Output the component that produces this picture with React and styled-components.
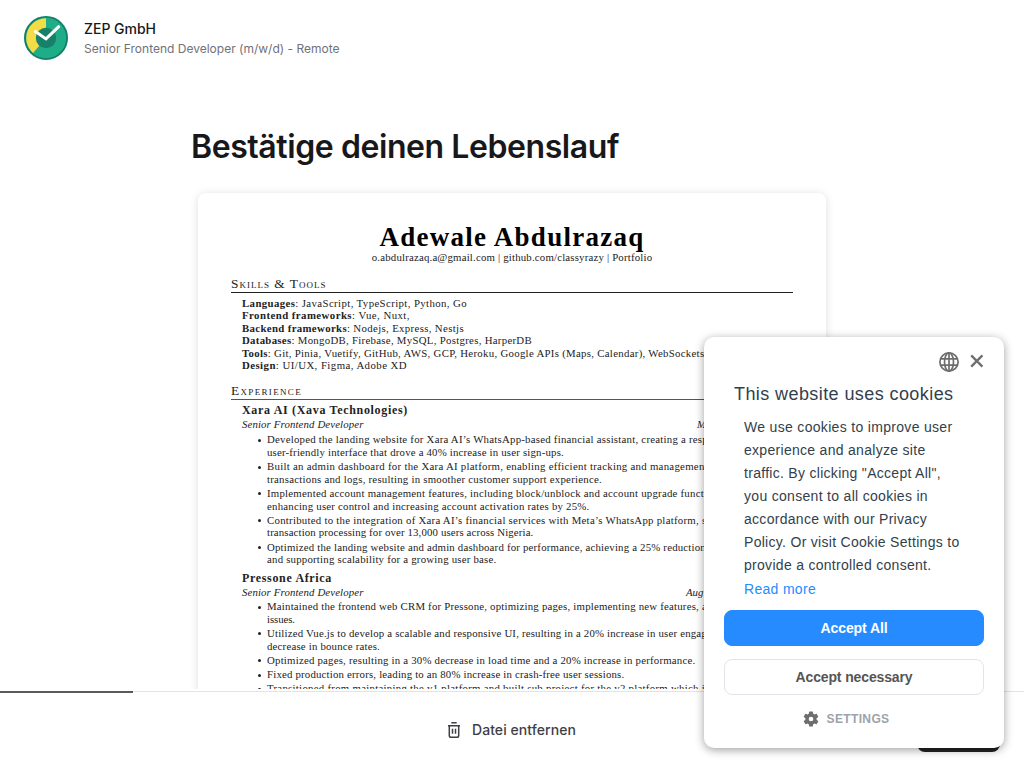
import React, { useLayoutEffect, useRef } from "react";
import styled, { createGlobalStyle } from "styled-components";

const Global = createGlobalStyle`
  * { box-sizing: border-box; }
  body { margin: 0; background: #fff; overflow: hidden; }
`;

const Page = styled.div`
  width: 1024px;
  height: 768px;
  display: flex;
  flex-direction: column;
  overflow: hidden;
  background: #fff;
  font-family: Inter, "Liberation Sans", sans-serif;
  color: #18181b;
`;

const Header = styled.header`
  flex: none;
  height: 76px;
  padding: 0 24px;
  display: flex;
  align-items: center;
  gap: 16px;
`;

const Company = styled.div`
  font-size: 14px;
  font-weight: 500;
  line-height: 20px;
  color: #18181b;
`;

const Position = styled.div`
  font-size: 12px;
  line-height: 18px;
  margin-top: 1px;
  color: #71717a;
`;

const Main = styled.main`
  flex: none;
  height: 613px;
  overflow: hidden;
  padding: 47px 192px 0;
`;

const Heading = styled.h1`
  margin: 0 0 0 -1px;
  height: 48px;
  font-size: 32px;
  font-weight: 600;
  line-height: 48px;
`;

const Sheet = styled.article`
  width: 628px;
  height: 860px;
  margin: 22px 0 0 6px;
  padding: 31px 33px;
  border-radius: 8px;
  background: #fff;
  box-shadow: 0 1px 10px rgba(0, 0, 0, 0.13);
  font-family: "Liberation Serif", serif;
  font-size: 10.8px;
  line-height: 12.5px;
  color: #222;
`;

const Name = styled.div`
  text-align: center;
  font-size: 27px;
  font-weight: 700;
  line-height: 26px;
  color: #000;
`;

const Contact = styled.div`
  margin-top: 0.8px;
  text-align: center;
`;

const SectionTitle = styled.div`
  margin-top: ${(p) => p.$top}px;
  padding-bottom: 1.4px;
  border-bottom: 1px solid ${(p) => p.$rule};
  font-size: 13.4px;
  line-height: 14px;
  font-variant: small-caps;
`;

const Skills = styled.div`
  padding: 3.8px 0 0 11px;
`;

const Row = styled.div`
  height: 12.5px;
  white-space: nowrap;
`;

const Job = styled.section`
  padding-left: 11px;
  margin-top: ${(p) => p.$top}px;
`;

const Employer = styled.div`
  height: 14px;
  font-size: 12px;
  font-weight: 700;
  line-height: 14px;
`;

const Role = styled.div`
  display: flex;
  justify-content: space-between;
  height: 12.5px;
  margin-top: 1.1px;
  font-style: italic;
`;

const Dates = styled.span`
  width: ${(p) => p.$w}px;
`;

const Points = styled.ul`
  list-style: none;
  margin: ${(p) => p.$top}px 0 0;
  padding: 0;
  display: flex;
  flex-direction: column;
  gap: 1.8px;
`;

const Point = styled.li`
  display: grid;
  grid-template-columns: 19px 1fr;
  column-gap: 6px;
`;

const Dot = styled.i`
  justify-self: end;
  width: 3px;
  height: 3px;
  margin-top: 5.4px;
  border-radius: 50%;
  background: #222;
`;

const Span = styled.span`
  display: inline-block;
  white-space: nowrap;
`;

/* Spreads its text over a given measure by adjusting the tracking. */
function Fit({ w, children }) {
  const ref = useRef(null);
  useLayoutEffect(() => {
    const el = ref.current;
    el.style.letterSpacing = "0.001px";
    const natural = el.getBoundingClientRect().width;
    el.style.letterSpacing = `${(w - natural) / el.textContent.length}px`;
  }, [w]);
  return <Span ref={ref}>{children}</Span>;
}

const Footer = styled.footer`
  flex: none;
  margin-top: 2px;
  height: 77px;
  border-top: 1px solid #e4e4e7;
  display: grid;
  grid-template-columns: 1fr auto 1fr;
  align-items: center;
  padding: 0 24px;
  position: relative;
`;

const Progress = styled.div`
  position: absolute;
  left: 0;
  top: -1px;
  width: 133px;
  height: 2px;
  background: #5a5a5c;
`;

const Remove = styled.div`
  grid-column: 2;
  display: flex;
  align-items: center;
  gap: 10px;
  padding-right: 2px;
  font-size: 14px;
  font-weight: 500;
  line-height: 20px;
  color: #3f3f46;
`;

const Next = styled.div`
  justify-self: end;
  width: 83px;
  height: 44px;
  border-radius: 8px;
  background: #222;
`;

const Cookie = styled.aside`
  position: absolute;
  left: 704px;
  top: 337px;
  width: 300px;
  height: 411px;
  border-radius: 10px;
  background: #fff;
  box-shadow: 0 2px 10px rgba(0, 0, 0, 0.38);
  padding: 14px 20px 0;
  font-family: "Liberation Sans", Arial, sans-serif;
  color: #323f4d;
`;

const Tools = styled.div`
  display: flex;
  justify-content: flex-end;
  gap: 11px;
  height: 22px;
`;

const CookieTitle = styled.div`
  margin: 9px 0 0 10px;
  height: 24px;
  font-size: 18px;
  line-height: 24px;
`;

const CookieText = styled.div`
  margin: 10px 0 0 20px;
  font-size: 14px;
  line-height: 23px;
`;

const More = styled.div`
  margin: 1px 0 0 20px;
  font-size: 14px;
  line-height: 23px;
  color: #268bff;
`;

const Button = styled.div`
  margin-top: ${(p) => p.$top}px;
  height: 36px;
  display: flex;
  align-items: center;
  justify-content: center;
  border-radius: 8px;
  border: ${(p) => (p.$primary ? "1px solid #268bff" : "1.5px solid #e1e5e9")};
  background: ${(p) => (p.$primary ? "#268bff" : "#fff")};
  color: ${(p) => (p.$primary ? "#fff" : "#555")};
  font-size: 14px;
  font-weight: 700;
`;

const Settings = styled.div`
  margin-top: 14px;
  height: 20px;
  display: flex;
  align-items: center;
  justify-content: center;
  gap: 7px;
  padding-right: 17px;
  font-size: 12px;
  font-weight: 700;
  color: #9ca3ab;
`;

const Logo = () => (
  <svg width="44" height="44" viewBox="0 0 44 44">
    <circle cx="22" cy="22" r="21.1" fill="#1fad87" stroke="#137e69" strokeWidth="1.8" />
    <path d="M22 2.2A19.8 19.8 0 0 0 9 36.9L22 22Z" fill="#f3dc45" />
    <circle cx="22" cy="22" r="10.2" fill="#16806a" />
    <path d="M11.4 15.6 22 22.9 34.7 10.7" fill="none" stroke="#fff" strokeWidth="3" strokeLinecap="round" />
  </svg>
);

const Trash = () => (
  <svg width="16" height="18" viewBox="0 0 16 18" fill="none" stroke="#3f3f46" strokeWidth="1.5">
    <path d="M5.3 1.8h5.4M2 4.7h12M3.3 4.7v9.7a1.8 1.8 0 0 0 1.8 1.8h5.8a1.8 1.8 0 0 0 1.8-1.8V4.7M6.5 7.7v5M9.5 7.7v5" />
  </svg>
);

const Globe = () => (
  <svg width="20" height="22" viewBox="0 0 20 22" fill="none" stroke="#6e6e6e" strokeWidth="1.7">
    <circle cx="10" cy="11" r="9.1" />
    <ellipse cx="10" cy="11" rx="4.5" ry="9.1" />
    <path d="M10 1.8v18.4M2 7.8h16M2 14.2h16" />
  </svg>
);

const Close = () => (
  <svg width="14" height="20" viewBox="0 0 14 20" fill="none" stroke="#6e6e6e" strokeWidth="2.3">
    <path d="M1.2 4.4 12.4 15.6M12.4 4.4 1.2 15.6" />
  </svg>
);

const Gear = () => (
  <svg width="18" height="18" viewBox="0 0 24 24" fill="#6e6e6e">
    <path d="M19.43 12.98c.04-.32.07-.64.07-.98s-.03-.66-.07-.98l2.11-1.65c.19-.15.24-.42.12-.64l-2-3.46c-.12-.22-.39-.3-.61-.22l-2.49 1c-.52-.4-1.08-.73-1.69-.98l-.38-2.65A.49.49 0 0 0 14 2h-4c-.25 0-.46.18-.49.42l-.38 2.65c-.61.25-1.17.59-1.69.98l-2.49-1c-.23-.09-.49 0-.61.22l-2 3.46c-.13.22-.07.49.12.64l2.11 1.65c-.04.32-.07.65-.07.98s.03.66.07.98l-2.11 1.65c-.19.15-.24.42-.12.64l2 3.46c.12.22.39.3.61.22l2.49-1c.52.4 1.08.73 1.69.98l.38 2.65c.03.24.24.42.49.42h4c.25 0 .46-.18.49-.42l.38-2.65c.61-.25 1.17-.59 1.69-.98l2.49 1c.23.09.49 0 .61-.22l2-3.46c.12-.22.07-.49-.12-.64zM12 15.1a3.1 3.1 0 1 1 0-6.2 3.1 3.1 0 0 1 0 6.2z" />
  </svg>
);

const skills = [
  ["Languages", "JavaScript, TypeScript, Python, Go", 225],
  ["Frontend frameworks", "Vue, Nuxt,", 168],
  ["Backend frameworks", "Nodejs, Express, Nestjs", 222],
  ["Databases", "MongoDB, Firebase, MySQL, Postgres, HarperDB", 290],
  ["Tools", "Git, Pinia, Vuetify, GitHub, AWS, GCP, Heroku, Google APIs (Maps, Calendar), WebSockets", 462.5],
  ["Design", "UI/UX, Figma, Adobe XD", 165],
];

const jobs = [
  {
    employer: ["Xara AI (Xava Technologies)", 166],
    dates: ["M", 96],
    top: 2.8,
    listTop: 2.6,
    points: [
      [["Developed the landing website for Xara AI’s WhatsApp-based financial assistant, creating a resp", 441], ["user-friendly interface that drove a 40% increase in user sign-ups.", 297]],
      [["Built an admin dashboard for the Xara AI platform, enabling efficient tracking and management", 441], ["transactions and logs, resulting in smoother customer support experience.", 335]],
      [["Implemented account management features, including block/unblock and account upgrade funct", 437], ["enhancing user control and increasing account activation rates by 25%.", 322.5]],
      [["Contributed to the integration of Xara AI’s financial services with Meta’s WhatsApp platform, s", 439.5], ["transaction processing for over 13,000 users across Nigeria.", 266.5]],
      [["Optimized the landing website and admin dashboard for performance, achieving a 25% reduction", 439], ["and supporting scalability for a growing user base.", 229.5]],
    ],
  },
  {
    employer: ["Pressone Africa", 90],
    dates: ["Aug", 107],
    top: 4.9,
    listTop: 2.1,
    points: [
      [["Maintained the frontend web CRM for Pressone, optimizing pages, implementing new features, a", 440], ["issues.", 28]],
      [["Utilized Vue.js to develop a scalable and responsive UI, resulting in a 20% increase in user engag", 440], ["decrease in bounce rates.", 113]],
      [["Optimized pages, resulting in a 30% decrease in load time and a 20% increase in performance.", 428.5]],
      [["Fixed production errors, leading to an 80% increase in crash-free user sessions.", 357.5]],
      [["Transitioned from maintaining the v1 platform and built sub project for the v2 platform which i", 438]],
    ],
  },
];

const cookieLines = [
  ["We use cookies to improve user", 208.5],
  ["experience and analyze site", 181.5],
  ["traffic. By clicking \"Accept All\",", 197],
  ["you consent to all cookies in", 184],
  ["accordance with our Privacy", 183],
  ["Policy. Or visit Cookie Settings to", 215.5],
  ["provide a controlled consent.", 187.5],
];

export default function App() {
  return (
    <Page>
      <Global />
      <Header>
        <Logo />
        <div>
          <Company><Fit w={72}>ZEP GmbH</Fit></Company>
          <Position><Fit w={255.5}>Senior Frontend Developer (m/w/d) - Remote</Fit></Position>
        </div>
      </Header>
      <Main>
        <Heading><Fit w={428}>Bestätige deinen Lebenslauf</Fit></Heading>
        <Sheet>
          <Name><Fit w={265}>Adewale Abdulrazaq</Fit></Name>
          <Contact><Fit w={280.5}>o.abdulrazaq.a@gmail.com | github.com/classyrazy | Portfolio</Fit></Contact>
          <SectionTitle $top={13.3} $rule="#222"><Fit w={95.5}>Skills &amp; Tools</Fit></SectionTitle>
          <Skills>
            {skills.map(([label, text, w]) => (
              <Row key={label}><Fit w={w}><b>{label}</b>: {text}</Fit></Row>
            ))}
          </Skills>
          <SectionTitle $top={12.3} $rule="#555"><Fit w={71}>Experience</Fit></SectionTitle>
          {jobs.map((job) => (
            <Job key={job.employer[0]} $top={job.top}>
              <Employer><Fit w={job.employer[1]}>{job.employer[0]}</Fit></Employer>
              <Role>
                <Fit w={121.5}>Senior Frontend Developer</Fit>
                <Dates $w={job.dates[1]}>{job.dates[0]}</Dates>
              </Role>
              <Points $top={job.listTop}>
                {job.points.map((lines) => (
                  <Point key={lines[0][0]}>
                    <Dot />
                    <div>
                      {lines.map(([text, w]) => (
                        <Row key={text}><Fit w={w}>{text}</Fit></Row>
                      ))}
                    </div>
                  </Point>
                ))}
              </Points>
            </Job>
          ))}
        </Sheet>
      </Main>
      <Footer>
        <Progress />
        <Remove><Trash /><Fit w={104}>Datei entfernen</Fit></Remove>
        <Next />
      </Footer>
      <Cookie>
        <Tools><Globe /><Close /></Tools>
        <CookieTitle><Fit w={219.5}>This website uses cookies</Fit></CookieTitle>
        <CookieText>
          {cookieLines.map(([text, w]) => (
            <div key={text}><Fit w={w}>{text}</Fit></div>
          ))}
        </CookieText>
        <More><Fit w={72}>Read more</Fit></More>
        <Button $primary $top={9}><Fit w={67}>Accept All</Fit></Button>
        <Button $top={13}><Fit w={117}>Accept necessary</Fit></Button>
        <Settings><Gear /><Fit w={63}>SETTINGS</Fit></Settings>
      </Cookie>
    </Page>
  );
}
